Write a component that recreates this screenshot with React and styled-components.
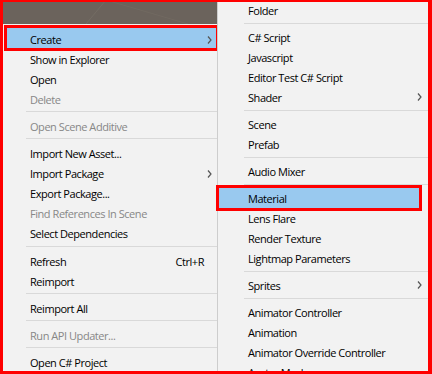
import styled, { createGlobalStyle } from "styled-components";

const GlobalStyle = createGlobalStyle`
  html, body {
    margin: 0;
    padding: 0;
    background: #f2f2f2;
    overflow: hidden;
  }
  body {
    font-family: "Open Sans", "Noto Sans", sans-serif;
  }
`;

const Frame = styled.div`
  position: relative;
  width: 432px;
  height: 374px;
  display: flex;
  overflow: hidden;
  background: #f2f2f2;
`;

// red annotation frame drawn over the screenshot
const Annotation = styled.div`
  position: absolute;
  inset: 0;
  border: 3px solid #ff0000;
  border-top-width: 2px;
  border-right-width: 4px;
  pointer-events: none;
`;

const ParentColumn = styled.div`
  width: 217px;
  flex: none;
  display: flex;
  flex-direction: column;
`;

const Backdrop = styled.div`
  height: 24px;
  flex: none;
  background: #6b635c;

  svg {
    display: block;
  }
`;

const Menu = styled.div`
  flex: 1;
  background: #f2f2f2;
  padding-top: ${(props) => props.$top}px;
`;

const SubMenu = styled(Menu)`
  border-left: 1px solid #cdcdcd;
`;

const Item = styled.div`
  box-sizing: border-box;
  display: flex;
  align-items: center;
  height: 20px;
  margin: ${(props) =>
    props.$side === "left"
      ? "0 1px 0 7px"
      : props.$active
      ? "0 13px 0 1px"
      : "0 5px 0 1px"};
  padding: ${(props) => (props.$side === "left" ? 3 : 0)}px
    ${(props) => (props.$side === "left" ? 4 : 5)}px 0
    ${(props) => (props.$side === "left" ? 23 : 29)}px;
  background: ${(props) => (props.$active ? "#99c9ef" : "transparent")};
  outline: ${(props) => (props.$active ? "3px solid #ff0000" : "none")};
  color: ${(props) => (props.$disabled ? "#878787" : "#000")};
  font-size: 11px;
  letter-spacing: -0.45px;
  white-space: nowrap;
`;

const Label = styled.span`
  flex: 1;
`;

const Shortcut = styled.span`
  margin-right: 8px;
`;

const Separator = styled.div`
  height: ${(props) => props.$h}px;
  display: flex;
  align-items: center;
  padding-left: 26px;

  &::after {
    content: "";
    flex: 1;
    height: 1px;
    background: #d9d9d9;
  }
`;

const Chevron = () => (
  <svg width="5" height="8" viewBox="0 0 5 8">
    <polyline
      points="1,0.5 4,4 1,7.5"
      fill="none"
      stroke="#555"
      strokeWidth="1.2"
    />
  </svg>
);

const parentItems = [
  { label: "Create", arrow: true, active: true },
  { label: "Show in Explorer" },
  { label: "Open" },
  { label: "Delete", disabled: true },
  { sep: 7 },
  { label: "Open Scene Additive", disabled: true },
  { sep: 7 },
  { label: "Import New Asset..." },
  { label: "Import Package", arrow: true },
  { label: "Export Package..." },
  { label: "Find References In Scene", disabled: true },
  { label: "Select Dependencies" },
  { sep: 8 },
  { label: "Refresh", shortcut: "Ctrl+R" },
  { label: "Reimport" },
  { sep: 7 },
  { label: "Reimport All" },
  { sep: 7 },
  { label: "Run API Updater...", disabled: true },
  { sep: 7 },
  { label: "Open C# Project" },
];

const createItems = [
  { label: "Folder" },
  { sep: 7 },
  { label: "C# Script" },
  { label: "Javascript" },
  { label: "Editor Test C# Script" },
  { label: "Shader", arrow: true },
  { sep: 7 },
  { label: "Scene" },
  { label: "Prefab" },
  { sep: 7 },
  { label: "Audio Mixer" },
  { sep: 7 },
  { label: "Material", active: true },
  { label: "Lens Flare" },
  { label: "Render Texture" },
  { label: "Lightmap Parameters" },
  { sep: 7 },
  { label: "Sprites", arrow: true },
  { sep: 7 },
  { label: "Animator Controller" },
  { label: "Animation" },
  { label: "Animator Override Controller" },
  { label: "Avatar Mask" },
];

const renderItems = (items, side) =>
  items.map((item, i) =>
    item.sep ? (
      <Separator key={i} $h={item.sep} />
    ) : (
      <Item
        key={i}
        $side={side}
        $active={item.active}
        $disabled={item.disabled}
      >
        <Label>{item.label}</Label>
        {item.shortcut && <Shortcut>{item.shortcut}</Shortcut>}
        {item.arrow && <Chevron />}
      </Item>
    )
  );

const App = () => {
  return (
    <>
      <GlobalStyle />
      <Frame>
        <ParentColumn>
          <Backdrop>
            <svg width="217" height="24">
              <line x1="86" y1="24" x2="106" y2="0" stroke="#746c64" />
              <line x1="106" y1="0" x2="188" y2="24" stroke="#716961" />
            </svg>
          </Backdrop>
          <Menu $top={4}>{renderItems(parentItems, "left")}</Menu>
        </ParentColumn>
        <SubMenu $top={0}>{renderItems(createItems, "right")}</SubMenu>
        <Annotation />
      </Frame>
    </>
  );
};

export default App;
